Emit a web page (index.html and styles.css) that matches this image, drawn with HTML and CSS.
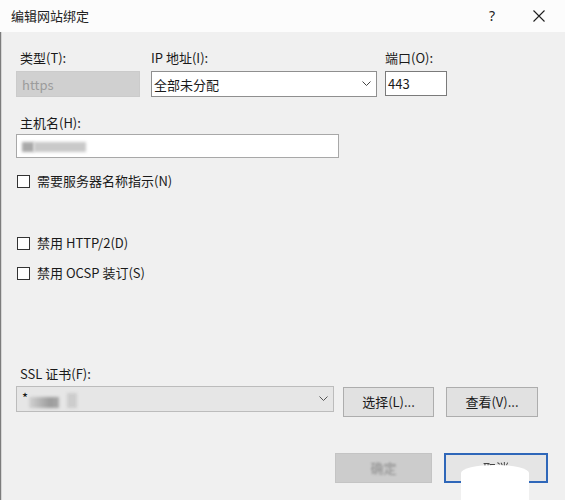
FILE: index.html
```html
<!DOCTYPE html>
<html lang="zh-CN">
<head>
<meta charset="utf-8">
<title>编辑网站绑定</title>
<link rel="stylesheet" href="styles.css">
</head>
<body>
<div class="window">
  <header class="titlebar">
    <span class="title">编辑网站绑定</span>
    <span class="help">?</span>
    <span class="close">
      <svg width="12" height="12" viewBox="0 0 12 12"><path d="M0.5 0.5L11.5 11.5M11.5 0.5L0.5 11.5" stroke="#1e1e1e" stroke-width="1.1" fill="none"/></svg>
    </span>
  </header>

  <main class="body">
    <div class="row-top">
      <div class="field f-type">
        <label class="lbl indent">类型(T):</label>
        <div class="box box-disabled">https</div>
      </div>
      <div class="field f-ip">
        <label class="lbl">IP 地址(I):</label>
        <div class="box combo">
          <span class="combo-text">全部未分配</span>
          <svg class="chev" width="9" height="5" viewBox="0 0 9 5"><path d="M0.5 0.5L4.5 4.5L8.5 0.5" stroke="#444" stroke-width="1" fill="none"/></svg>
        </div>
      </div>
      <div class="field f-port">
        <label class="lbl">端口(O):</label>
        <div class="box input port">443</div>
      </div>
    </div>

    <label class="lbl indent host-lbl">主机名(H):</label>
    <div class="box input host">
      <span class="smudge s-host-a"></span><span class="smudge s-host-b"></span>
    </div>

    <div class="check cb-sni"><span class="cbox"></span><span>需要服务器名称指示(N)</span></div>
    <div class="check cb-http2"><span class="cbox"></span><span>禁用 HTTP/2(D)</span></div>
    <div class="check cb-ocsp"><span class="cbox"></span><span>禁用 OCSP 装订(S)</span></div>

    <label class="lbl indent ssl-lbl">SSL 证书(F):</label>
    <div class="row-ssl">
      <div class="box combo ssl">
        <span class="star">*</span>
        <span class="smudge s-cert-a"></span><span class="smudge s-cert-b"></span>
        <svg class="chev" width="9" height="5" viewBox="0 0 9 5"><path d="M0.5 0.5L4.5 4.5L8.5 0.5" stroke="#555" stroke-width="1" fill="none"/></svg>
      </div>
      <button class="btn btn-select">选择(L)...</button>
      <button class="btn btn-view">查看(V)...</button>
    </div>

    <div class="row-actions">
      <button class="btn btn-ok" disabled><span class="ok-text">确定</span></button>
      <button class="btn btn-cancel"><span class="cancel-text">取消</span></button>
      <span class="wipe"></span>
    </div>
  </main>
</div>
</body>
</html>
```

FILE: styles.css
```css
* { box-sizing: border-box; }

html, body {
  margin: 0;
  padding: 0;
  background: #f0f0f0;
}

body {
  font-family: "Noto Sans CJK SC", "Noto Sans", sans-serif;
  font-size: 13px;
  color: #1a1a1a;
}

.window {
  width: 565px;
  height: 500px;
  overflow: hidden;
  display: flex;
  flex-direction: column;
  background: #f0f0f0;
}

/* ---- title bar ---- */
.titlebar {
  height: 32px;
  flex: none;
  background: #fcfcfc;
  display: flex;
  align-items: center;
  padding: 0 20px 0 11px;
}

.title {
  font-size: 13px;
  color: #222;
  line-height: 16px;
}

.help {
  margin-left: auto;
  font-family: "Noto Sans", sans-serif;
  font-size: 14px;
  line-height: 16px;
  color: #222;
}

.close {
  margin-left: 38px;
  display: flex;
}

/* ---- dialog body ---- */
.body {
  flex: 1;
  position: relative;
  padding: 18px 0 0 16px;
  box-shadow: inset 1px 0 0 #7c7c7c, inset 2px 0 0 #d6d6d6;
}

.lbl {
  display: block;
  height: 16px;
  line-height: 16px;
  white-space: nowrap;
}

.indent { margin-left: 4px; }

.row-top {
  display: flex;
  align-items: flex-start;
}

.field { display: flex; flex-direction: column; }
.field .box { margin-top: 5px; }

.f-type { width: 124px; margin-right: 11px; }
.f-ip   { width: 226px; margin-right: 8px; }
.f-port { width: 62px; }

.box {
  height: 26px;
  display: flex;
  align-items: center;
  white-space: nowrap;
  position: relative;
}

.box-disabled {
  background: #d0d0d0;
  border: 1px solid #cbcbcb;
  color: #9c9c9c;
  padding-left: 5px;
}

.combo {
  background: #fff;
  border: 1px solid #8f8f8f;
  padding-left: 2px;
}

.combo .chev {
  position: absolute;
  right: 5px;
  top: 50%;
  margin-top: -3px;
}

.input {
  background: #fff;
  border: 1px solid #7a7a7a;
  padding-left: 2px;
}

.port { height: 25px; }

.host-lbl { margin-top: 18px; }

.host {
  width: 323px;
  height: 24px;
  margin-top: 3px;
  border-color: #a8a8a8;
}

/* blurred, obscured values */
.smudge {
  display: block;
  position: absolute;
  filter: blur(1.6px);
}

.s-host-a { left: 5px;  top: 7px; width: 12px; height: 10px; background: #a9a9a9; }
.s-host-b { left: 17px; top: 7px; width: 52px; height: 10px; background: #c9c9c9; }

.s-cert-a { left: 12px; top: 10px; width: 30px; height: 11px;
  background: linear-gradient(90deg, #d2d2d2, #9c9c9c 70%, #a8a8a8); }
.s-cert-b { left: 50px; top: 6px;  width: 10px; height: 15px; background: #cdcdcd; }

/* ---- check boxes ---- */
.check {
  display: flex;
  align-items: center;
  height: 16px;
  line-height: 16px;
  gap: 7px;
  padding-left: 1px;
}

.cbox {
  width: 13px;
  height: 13px;
  flex: none;
  background: #fff;
  border: 1px solid #333;
}

.cb-sni   { margin-top: 15px; }
.cb-http2 { margin-top: 46px; }
.cb-ocsp  { margin-top: 14px; }

/* ---- certificate row ---- */
.ssl-lbl { margin-top: 85px; }

.row-ssl {
  display: flex;
  align-items: flex-start;
  margin-top: 4px;
}

.ssl {
  width: 318px;
  background: #e6e6e6;
  border-color: #bcbcbc;
  padding-left: 5px;
}

.star {
  align-self: flex-start;
  margin-top: 1px;
  font-size: 13px;
  color: #111;
}

.ssl .chev { right: 5px; }

.btn {
  font-family: inherit;
  font-size: 13px;
  color: #1a1a1a;
  background: #e1e1e1;
  border: 1px solid #adadad;
  height: 30px;
  padding: 0;
  margin: 1px 0 0;
  line-height: 16px;
}

.btn-select { width: 91px; margin-left: 9px; }
.btn-view   { width: 92px; margin-left: 12px; }

/* ---- dialog actions ---- */
.row-actions {
  display: flex;
  justify-content: flex-end;
  gap: 12px;
  margin-top: 36px;
  padding-right: 17px;
  position: relative;
}

.row-actions .btn { margin: 0; }

.btn-ok {
  width: 97px;
  background: #cccccc;
  border-color: #c4c4c4;
}

.ok-text {
  color: #8a8a8a;
  filter: blur(1px);
}

.btn-cancel {
  width: 104px;
  background: #e5e5e5;
  border: 2px solid #2f67b9;
}

.cancel-text {
  color: #444;
  filter: blur(0.4px);
}

/* white patch lying over the lower part of the cancel button */
.wipe {
  position: absolute;
  left: 445px;
  top: 12px;
  width: 68px;
  height: 40px;
  background: #ffffff;
  border-radius: 34px 34px 4px 4px / 8px 8px 4px 4px;
}
```
